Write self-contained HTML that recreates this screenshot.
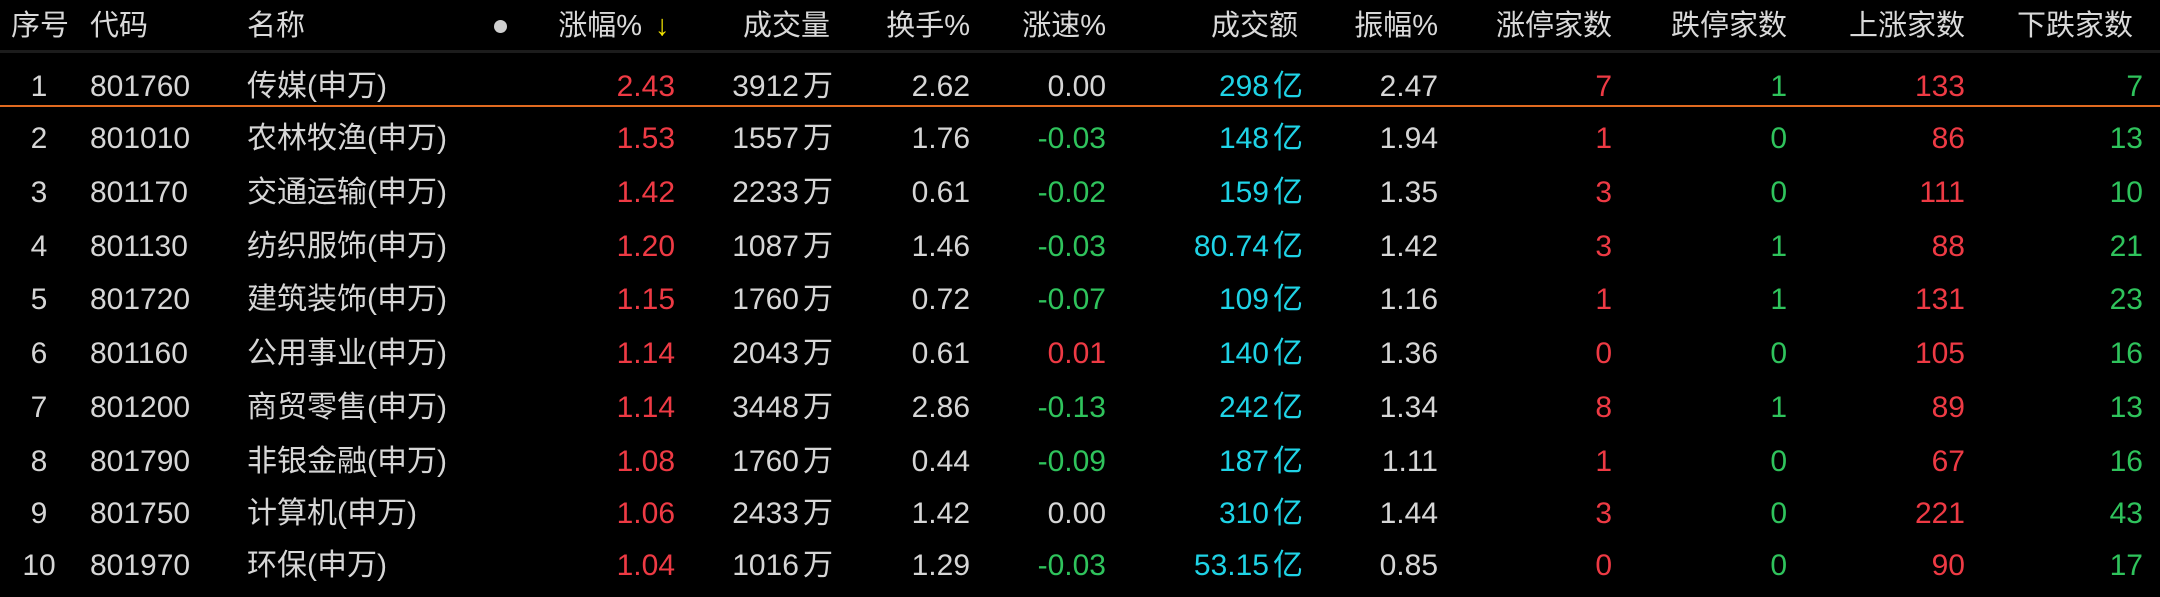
<!DOCTYPE html>
<html><head><meta charset="utf-8"><style>
body{margin:0;background:#000;width:2160px;height:597px;overflow:hidden;font-family:"Liberation Sans","Noto Sans CJK SC",sans-serif;font-size:30px;color:#d6d6d6}
.r{position:absolute;left:0;width:2160px;height:52px;line-height:52px}
.r span{position:absolute;white-space:nowrap}
.n{left:22px;width:34px;text-align:center}
.cd{left:90px}.nm{left:247px}
.a{right:1485px}.b{right:1327px}.c{right:1190px}.d{right:1054px}.e{right:857px}.f{right:722px}.g{right:548px}.h{right:373px}.i{right:195px}.j{right:17px}
.R{color:#ee3a44}.G{color:#2fc35c}.C{color:#1fd3e6}
.r span .u{position:static;margin-left:4px}
.hd{color:#d9d9d9;font-size:29px}
</style></head><body>
<div class="r hd" style="top:0px">
<span style="left:11px">序号</span><span class="cd">代码</span><span class="nm">名称</span>
<span style="left:494px;top:20px;width:13px;height:13px;border-radius:50%;background:#cfcfcf"></span>
<span style="right:1518px">涨幅%</span><span style="left:655px;color:#f2e400">↓</span>
<span style="right:1330px">成交量</span><span class="c">换手%</span><span class="d">涨速%</span><span style="right:862px">成交额</span><span class="f">振幅%</span><span class="g">涨停家数</span><span class="h">跌停家数</span><span class="i">上涨家数</span><span class="j" style="right:27px">下跌家数</span>
</div>
<div style="position:absolute;left:0;top:50px;width:2160px;height:3px;background:#1c1c1c"></div>
<div style="position:absolute;left:0;top:105px;width:2160px;height:2px;background:#e06a20"></div>

<div class="r" style="top:61px"><span class="n">1</span><span class="cd">801760</span><span class="nm">传媒(申万)</span><span class="a R">2.43</span><span class="b">3912<span class="u">万</span></span><span class="c">2.62</span><span class="d">0.00</span><span class="e C">298<span class="u">亿</span></span><span class="f">2.47</span><span class="g R">7</span><span class="h G">1</span><span class="i R">133</span><span class="j G">7</span></div>
<div class="r" style="top:113px"><span class="n">2</span><span class="cd">801010</span><span class="nm">农林牧渔(申万)</span><span class="a R">1.53</span><span class="b">1557<span class="u">万</span></span><span class="c">1.76</span><span class="d G">-0.03</span><span class="e C">148<span class="u">亿</span></span><span class="f">1.94</span><span class="g R">1</span><span class="h G">0</span><span class="i R">86</span><span class="j G">13</span></div>
<div class="r" style="top:167px"><span class="n">3</span><span class="cd">801170</span><span class="nm">交通运输(申万)</span><span class="a R">1.42</span><span class="b">2233<span class="u">万</span></span><span class="c">0.61</span><span class="d G">-0.02</span><span class="e C">159<span class="u">亿</span></span><span class="f">1.35</span><span class="g R">3</span><span class="h G">0</span><span class="i R">111</span><span class="j G">10</span></div>
<div class="r" style="top:221px"><span class="n">4</span><span class="cd">801130</span><span class="nm">纺织服饰(申万)</span><span class="a R">1.20</span><span class="b">1087<span class="u">万</span></span><span class="c">1.46</span><span class="d G">-0.03</span><span class="e C">80.74<span class="u">亿</span></span><span class="f">1.42</span><span class="g R">3</span><span class="h G">1</span><span class="i R">88</span><span class="j G">21</span></div>
<div class="r" style="top:274px"><span class="n">5</span><span class="cd">801720</span><span class="nm">建筑装饰(申万)</span><span class="a R">1.15</span><span class="b">1760<span class="u">万</span></span><span class="c">0.72</span><span class="d G">-0.07</span><span class="e C">109<span class="u">亿</span></span><span class="f">1.16</span><span class="g R">1</span><span class="h G">1</span><span class="i R">131</span><span class="j G">23</span></div>
<div class="r" style="top:328px"><span class="n">6</span><span class="cd">801160</span><span class="nm">公用事业(申万)</span><span class="a R">1.14</span><span class="b">2043<span class="u">万</span></span><span class="c">0.61</span><span class="d R">0.01</span><span class="e C">140<span class="u">亿</span></span><span class="f">1.36</span><span class="g R">0</span><span class="h G">0</span><span class="i R">105</span><span class="j G">16</span></div>
<div class="r" style="top:382px"><span class="n">7</span><span class="cd">801200</span><span class="nm">商贸零售(申万)</span><span class="a R">1.14</span><span class="b">3448<span class="u">万</span></span><span class="c">2.86</span><span class="d G">-0.13</span><span class="e C">242<span class="u">亿</span></span><span class="f">1.34</span><span class="g R">8</span><span class="h G">1</span><span class="i R">89</span><span class="j G">13</span></div>
<div class="r" style="top:436px"><span class="n">8</span><span class="cd">801790</span><span class="nm">非银金融(申万)</span><span class="a R">1.08</span><span class="b">1760<span class="u">万</span></span><span class="c">0.44</span><span class="d G">-0.09</span><span class="e C">187<span class="u">亿</span></span><span class="f">1.11</span><span class="g R">1</span><span class="h G">0</span><span class="i R">67</span><span class="j G">16</span></div>
<div class="r" style="top:488px"><span class="n">9</span><span class="cd">801750</span><span class="nm">计算机(申万)</span><span class="a R">1.06</span><span class="b">2433<span class="u">万</span></span><span class="c">1.42</span><span class="d">0.00</span><span class="e C">310<span class="u">亿</span></span><span class="f">1.44</span><span class="g R">3</span><span class="h G">0</span><span class="i R">221</span><span class="j G">43</span></div>
<div class="r" style="top:540px"><span class="n">10</span><span class="cd">801970</span><span class="nm">环保(申万)</span><span class="a R">1.04</span><span class="b">1016<span class="u">万</span></span><span class="c">1.29</span><span class="d G">-0.03</span><span class="e C">53.15<span class="u">亿</span></span><span class="f">0.85</span><span class="g R">0</span><span class="h G">0</span><span class="i R">90</span><span class="j G">17</span></div>
</body></html>
